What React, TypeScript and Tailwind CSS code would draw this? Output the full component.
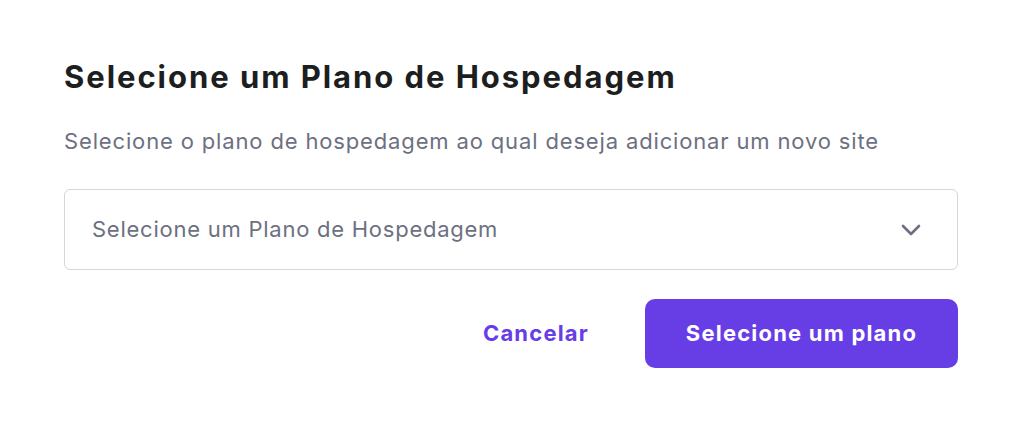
export default function App() {
  return (
    <div className="min-h-screen bg-white font-['Inter',sans-serif]">
      <div className="w-[894px] ml-16 pt-[57px]">
        <h1 className="text-[31px] leading-[40px] font-bold text-[#1d1e20] tracking-[1.95px]">
          Selecione um Plano de Hospedagem
        </h1>
        <p className="mt-[29px] text-[22px] leading-[30px] text-[#6d7081] tracking-[0.85px]">
          Selecione o plano de hospedagem ao qual deseja adicionar um novo site
        </p>
        <div className="mt-[33px] h-[81px] flex items-center justify-between rounded-[6px] border border-[#d5d7dc] pl-[27px] pr-[36px]">
          <span className="text-[22px] text-[#6d7081] tracking-[0.75px]">Selecione um Plano de Hospedagem</span>
          <svg width="20" height="12" viewBox="0 0 20 12" fill="none">
            <path d="M2 2l8 8 8-8" stroke="#6d7081" strokeWidth="2.6" strokeLinecap="round" strokeLinejoin="round" />
          </svg>
        </div>
        <div className="mt-[29px] flex items-center justify-end gap-[56px]">
          <button className="text-[22px] font-bold text-[#673de6] tracking-[1.2px]">Cancelar</button>
          <button className="h-[69px] w-[313px] rounded-[10px] bg-[#673de6] text-[22px] font-bold text-white tracking-[1.2px]">
            Selecione um plano
          </button>
        </div>
      </div>
    </div>
  );
}
